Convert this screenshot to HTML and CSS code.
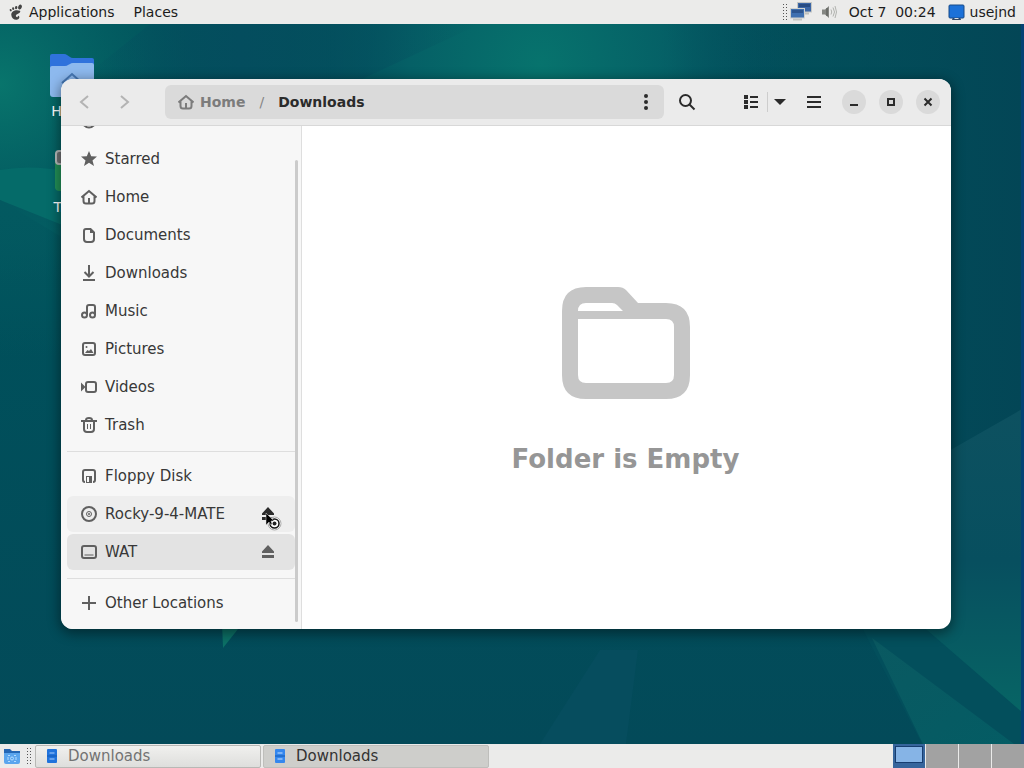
FILE: index.html
```html
<!DOCTYPE html>
<html lang="en">
<head>
<meta charset="utf-8">
<title>Downloads</title>
<link rel="stylesheet" href="styles.css">
</head>
<body>
<header class="panel panel-top">
  <nav class="panel-menus">
    <button class="panel-button" type="button">
      <svg class="foot" width="16" height="18" viewBox="0 0 16 18"><g fill="#444"><ellipse cx="12" cy="4" rx="1.800" ry="2.500" transform="rotate(25 12 4)"/><ellipse cx="8.200" cy="4.600" rx="1.200" ry="1.600" transform="rotate(8 8.200 4.600)"/><ellipse cx="5.200" cy="5.600" rx="1.100" ry="1.400" transform="rotate(-12 5.200 5.600)"/><ellipse cx="2.700" cy="7.200" rx="1" ry="1.200" transform="rotate(-25 2.700 7.200)"/><path d="M12 7.800C8 6.200 3 8 3.300 12c.2 3.500 3 5 5.500 4.700 2-.2 3-2 2.400-3.200-.4-1-1.500-1-1.400-.2.100 1-.8 1.200-1.500.5-1-1.200-.2-2.300 1.200-2.800 2-.7 3.500-2.400 2.500-3.200z"/></g></svg>
      Applications</button>
    <button class="panel-button" type="button">Places</button>
  </nav>
  <div class="tray">
    <span class="grip"></span>
    <svg width="22" height="20" viewBox="0 0 22 20"><rect x="7.500" y=".5" width="14" height="9.500" fill="#3b66a6" stroke="#c5c7c4"/><path d="M9 2h11v3H9z" fill="#284c83"/><path d="M12 10.500h7v2h-7z" fill="#bfc1bd"/><rect x=".5" y="6.500" width="14" height="9.500" fill="#3f70b0" stroke="#d0d2cf"/><path d="M2 8h11v3H2z" fill="#2d558e"/><path d="M3 16.500h9v2H3z" fill="#c2c4c0"/></svg>
    <svg class="speaker" width="16" height="16" viewBox="0 0 16 16"><path d="M1 5.500h3L8 2v12l-4-3.500H1z" fill="#858783"/><path d="M6 4v8" stroke="#50524f"/><path d="M10 5.500q1.500 2.500 0 5M12 3.500q3 4.500 0 9M14 2q3 6 0 12" fill="none" stroke="#b0b2ae"/></svg>
    <time class="clock">Oct 7&nbsp; 00:24</time>
    <button class="panel-button user" type="button"><svg width="17" height="17" viewBox="0 0 17 17"><path d="M5 13h7l1 3H4z" fill="#344965"/><rect x="1" y="1" width="15" height="13" rx="1" fill="#1c71d8" stroke="#164a88"/><path d="M6.500 14.500h4" stroke="#dedede"/></svg>usejnd</button>
  </div>
</header>

<main class="desktop">
  <svg class="wallpaper" viewBox="0 0 1024 720" preserveAspectRatio="none" aria-hidden="true">
    <defs>
      <linearGradient id="base" x1="0" y1="0" x2="0" y2="1"><stop offset="0" stop-color="#01525b"/><stop offset=".4" stop-color="#00505b"/><stop offset="1" stop-color="#034a59"/></linearGradient>
      <radialGradient id="glow" cx="540" cy="40" r="260" gradientUnits="userSpaceOnUse"><stop offset="0" stop-color="#07736d"/><stop offset=".5" stop-color="#056066"/><stop offset="1" stop-color="#044e60" stop-opacity="0"/></radialGradient>
      <radialGradient id="corner" cx="0" cy="60" r="200" gradientUnits="userSpaceOnUse"><stop offset="0" stop-color="#08756c"/><stop offset="1" stop-color="#056568" stop-opacity="0"/></radialGradient>
      <linearGradient id="dark"><stop offset="0" stop-color="#034a59" stop-opacity="0"/><stop offset="1" stop-color="#034656"/></linearGradient>
      <linearGradient id="shade"><stop offset="0" stop-color="#044d5e" stop-opacity="0"/><stop offset=".4" stop-color="#044d5e"/><stop offset="1" stop-color="#044d5e" stop-opacity="0"/></linearGradient>
      <linearGradient id="fade" x1="0" y1="0" x2="0" y2="1"><stop offset="0" stop-color="#035960"/><stop offset="1" stop-color="#035960" stop-opacity="0"/></linearGradient>
      <linearGradient id="ray" x1="0" y1="0" x2="1" y2="1"><stop offset="0" stop-color="#0a5961"/><stop offset="1" stop-color="#045c64"/></linearGradient>
      <linearGradient id="facet" x1="0" y1="0" x2="0" y2="1"><stop offset="0" stop-color="#0d5160"/><stop offset=".5" stop-color="#074f5f"/><stop offset="1" stop-color="#076565"/></linearGradient>
    </defs>
    <rect width="1024" height="720" fill="url(#base)"/>
    <rect width="1024" height="720" fill="url(#glow)"/>
    <rect width="400" height="300" fill="url(#corner)"/>
    <path d="M150 0h330L360 56H80z" fill="url(#shade)"/>
    <rect x="660" width="364" height="430" fill="url(#dark)"/>
    <path d="M0 146q32-6 70 2v70L0 176z" fill="#056b69"/>
    <path d="M0 176l70 28v130H0z" fill="url(#fade)"/>
    <path d="M222 600h20l-19 24z" fill="#0c7066"/>
    <path d="M600 626h38l-12 94h-86z" fill="#064d5e"/>
    <path d="M940 432l84-48v306L870 600z" fill="url(#facet)"/>
    <path d="M860 600h60l104 90v30H922z" fill="#034f5c"/>
    <path d="M872 614l142 106h-91z" fill="url(#ray)"/>
    <path d="M1021 0h3v720h-3z" fill="#034274"/>
  </svg>

  <div class="shortcuts">
    <a class="shortcut" href="#home"><svg width="44" height="48" viewBox="0 0 44 48"><path d="M0 3q0-2 2-2h12q2 0 3 1l3 2q1 1 3 1h19q2 0 2 2v20H0z" fill="#2f72dc"/><path d="M0 15q0-2 2-2h13q2 0 3-1l2-1q1-1 3-1h19q2 0 2 2v29q0 3-3 3H3q-3 0-3-3z" fill="#8db9ee"/><path d="M12 30l10-9 10 9" fill="none" stroke="#4678b5" stroke-width="2"/></svg><span>Home</span></a>
    <a class="shortcut" href="#trash"><svg width="36" height="48" viewBox="0 0 36 48"><path d="M1 12h34v27q0 3-3 3H5q-3 0-4-3z" fill="#229158"/><rect x="2" y="2" width="32" height="13" rx="3" fill="#707274" stroke="#b8bcbc" stroke-width="2"/></svg><span>Trash</span></a>
  </div>

  <section class="window" aria-label="Files">
    <div class="headerbar">
      <div class="history">
        <button class="icon-button faded" type="button" aria-label="Back"><svg width="16" height="16" viewBox="0 0 16 16"><path d="M11 2L4 8l7 6" class="line"/></svg></button>
        <button class="icon-button faded" type="button" aria-label="Forward"><svg width="16" height="16" viewBox="0 0 16 16"><path d="M5 2l7 6-7 6" class="line"/></svg></button>
      </div>
      <div class="pathbar">
        <a class="crumb" href="#home"><svg width="16" height="16" viewBox="0 0 16 16"><path d="M.5 8.500L8 2l7.500 6.500M2.500 7.500v4.500q0 2.500 2.500 2.500h6q2.500 0 2.500-2.500V7.500" class="line"/><path d="M7 9h2v6H7z" fill="currentColor"/></svg>Home</a>
        <span class="slash">/</span>
        <a class="crumb current" href="#downloads">Downloads</a>
        <button class="icon-button more" type="button" aria-label="Folder menu"><svg width="16" height="18" viewBox="0 0 16 18"><g fill="currentColor"><circle cx="8" cy="3" r="2"/><circle cx="8" cy="9" r="2"/><circle cx="8" cy="15" r="2"/></g></svg></button>
      </div>
      <button class="icon-button search" type="button" aria-label="Search"><svg width="18" height="18" viewBox="0 0 18 18"><circle cx="7.500" cy="7.500" r="5.500" class="line"/><path d="M11.500 11.500l5 5" class="line"/></svg></button>
      <div class="view-switch">
        <button class="icon-button" type="button" aria-label="List view"><svg width="16" height="16" viewBox="0 0 16 16"><path d="M1 1h4v4H1zM1 6h4v4H1zM1 11h4v4H1zM7 2h8v2H7zM7 7h8v2H7zM7 12h8v2H7z" fill="currentColor"/></svg></button>
        <button class="icon-button arrow" type="button" aria-label="View options"><svg width="14" height="8" viewBox="0 0 14 8"><path d="M1 1h12L7 7z" fill="currentColor"/></svg></button>
      </div>
      <button class="icon-button" type="button" aria-label="Main menu"><svg width="16" height="16" viewBox="0 0 16 16"><path d="M1 2h14v2H1zM1 7h14v2H1zM1 12h14v2H1z" fill="currentColor"/></svg></button>
      <div class="controls">
        <button class="control" type="button" aria-label="Minimize"><svg width="16" height="16" viewBox="0 0 16 16"><path d="M4 10h8v2H4z" fill="currentColor"/></svg></button>
        <button class="control" type="button" aria-label="Maximize"><svg width="16" height="16" viewBox="0 0 16 16"><path d="M5 5h6v6H5z" class="line"/></svg></button>
        <button class="control" type="button" aria-label="Close"><svg width="16" height="16" viewBox="0 0 16 16"><path d="M4.500 4.500l7 7M11.500 4.500l-7 7" class="line"/></svg></button>
      </div>
    </div>

    <div class="content">
      <aside class="sidebar">
        <div class="places">
          <a class="place" href="#recent" aria-label="Recent"><svg width="16" height="16" viewBox="0 0 16 16"><circle cx="8" cy="8" r="6.500" class="line"/><path d="M8 4v5h4" class="line"/></svg></a>
          <a class="place" href="#starred"><svg width="16" height="16" viewBox="0 0 16 16"><path d="M8 0l2.200 5.300L16 5.600l-4.500 3.800L13 15l-5-3.200L3 15l1.500-5.600L0 5.600l5.800-.3z" fill="currentColor"/></svg>Starred</a>
          <a class="place" href="#home"><svg width="16" height="16" viewBox="0 0 16 16"><path d="M.5 8.500L8 2l7.500 6.500M2.500 7.500v4.500q0 2.500 2.500 2.500h6q2.500 0 2.500-2.500V7.500" class="line"/><path d="M7 9h2v6H7z" fill="currentColor"/></svg>Home</a>
          <a class="place" href="#documents"><svg width="16" height="16" viewBox="0 0 16 16"><path d="M5 2h4.500L13 5.500V12q0 3-3 3H6q-3 0-3-3V4q0-2 2-2z" class="line"/><path d="M9 2v4h4z" fill="currentColor"/></svg>Documents</a>
          <a class="place" href="#downloads"><svg width="16" height="16" viewBox="0 0 16 16"><path d="M8 0v11M3.500 7L8 11.500 12.500 7M2 15h12" class="line"/></svg>Downloads</a>
          <a class="place" href="#music"><svg width="16" height="16" viewBox="0 0 16 16"><circle cx="3.500" cy="12" r="2.500" class="line"/><circle cx="11.500" cy="12" r="2.500" class="line"/><path d="M6 12V4q0-2 2-2h4q2 0 2 2v8" class="line"/></svg>Music</a>
          <a class="place" href="#pictures"><svg width="16" height="16" viewBox="0 0 16 16"><rect x="2" y="2" width="12" height="12" rx="2" class="line"/><path d="M4 12l2.500-3 1.500 1 2-2 2.500 4z" fill="currentColor"/><circle cx="5.500" cy="6" r="1" fill="currentColor"/></svg>Pictures</a>
          <a class="place" href="#videos"><svg width="16" height="16" viewBox="0 0 16 16"><rect x="5" y="3" width="10" height="10" rx="2" class="line"/><path d="M0 3.500L4.500 8 0 12.500z" fill="currentColor"/></svg>Videos</a>
          <a class="place" href="#trash"><svg width="16" height="16" viewBox="0 0 16 16"><path d="M0 4h16M5 4V3q0-2 3-2t3 2v1M3 4v8q0 3 3 3h4q3 0 3-3V4" class="line"/><path d="M6.500 7v5M9.500 7v5" stroke="currentColor" fill="none"/></svg>Trash</a>
          <hr class="rule">
          <a class="place" href="#floppy"><svg width="16" height="16" viewBox="0 0 16 16"><path d="M4 14q-2 0-2-2V4q0-2 2-2h8q2 0 2 2v8q0 2-2 2" class="line"/><path d="M5 8h6v7H5zM6 9v5h2V9z" fill="currentColor" fill-rule="evenodd"/></svg>Floppy Disk</a>
          <div class="place hovered"><a class="place-link" href="#rocky"><svg width="16" height="16" viewBox="0 0 16 16"><circle cx="8" cy="8" r="7" class="line"/><circle cx="8" cy="8" r="2.500" fill="none" stroke="currentColor"/><circle cx="8" cy="8" r="1" fill="currentColor"/></svg>Rocky-9-4-MATE</a>
            <button class="eject dark" type="button" aria-label="Eject Rocky-9-4-MATE"><svg width="16" height="16" viewBox="0 0 16 16"><path d="M8 1l6 6.500V9H2V7.500zM2 11h12v3H2z" fill="currentColor"/></svg>
              <svg class="pointer" width="18" height="21" viewBox="0 0 18 21"><circle cx="10.500" cy="13.500" r="6.500" fill="#fff" stroke="#aaa"/><circle cx="10.500" cy="13.500" r="4.500" fill="#fff" stroke="#111" stroke-width="1.500"/><circle cx="10.500" cy="13.500" r="2" fill="#222"/><path d="M2 3v12l3-3 2 3 1-1-1-3h3z" fill="#000" stroke="#ddd" stroke-width=".5"/></svg></button></div>
          <div class="place selected"><a class="place-link" href="#wat"><svg width="16" height="16" viewBox="0 0 16 16"><rect x="1" y="2" width="14" height="12" rx="2" class="line"/><path d="M3.500 11h9" stroke="currentColor" fill="none"/></svg>WAT</a>
            <button class="eject" type="button" aria-label="Eject WAT"><svg width="16" height="16" viewBox="0 0 16 16"><path d="M8 1l6 6.500V9H2V7.500zM2 11h12v3H2z" fill="currentColor"/></svg></button></div>
          <hr class="rule">
          <a class="place" href="#other"><svg width="16" height="16" viewBox="0 0 16 16"><path d="M8 1v14M1 8h14" class="line"/></svg>Other Locations</a>
        </div>
        <span class="scrollbar"></span>
      </aside>
      <div class="empty">
        <svg width="128" height="128" viewBox="0 0 128 128"><path fill="#c6c6c6" fill-rule="evenodd" d="M24 8h32q5 0 8 3l12 13h28q24 0 24 24v48q0 24-24 24H24Q0 120 0 96V32Q0 8 24 8zM16 32h45l-6-6q-2-2-5-2H24q-8 0-8 8zM16 40v56q0 8 8 8h80q8 0 8-8V48q0-8-8-8z"/></svg>
        <h1>Folder is Empty</h1>
      </div>
    </div>
  </section>
</main>

<footer class="panel panel-bottom">
  <button class="panel-button show-desktop" type="button" aria-label="Show desktop"><svg width="16" height="16" viewBox="0 0 16 16"><path d="M0 1h6l2 2h8v4H0z" fill="#2467b5"/><path d="M0 5h16v9q0 2-2 2H2q-2 0-2-2z" fill="#5aa5ee"/><g fill="none" stroke="#b5dcff"><circle cx="8" cy="10.500" r="1.500"/><path d="M4 7.500h2M10 7.500h2M4 9v3M12 9v3M4 13.500h2M10 13.500h2"/></g></svg></button>
  <span class="grip"></span>
  <div class="tasks">
    <button class="task minimized" type="button"><svg width="14" height="14" viewBox="0 0 14 14"><rect x="2" width="10" height="14" rx="1" fill="#2073dc"/><path d="M4.500 4h5M4.500 10h5" stroke="#a9d0ff"/><path d="M2 7h10" stroke="#155bb2"/></svg>Downloads</button>
    <button class="task active" type="button"><svg width="14" height="14" viewBox="0 0 14 14"><rect x="2" width="10" height="14" rx="1" fill="#3487ee"/><path d="M4.500 4h5M4.500 10h5" stroke="#c8e2ff"/><path d="M2 7h10" stroke="#155bb2"/></svg>Downloads</button>
  </div>
  <div class="pager">
    <button class="workspace on" type="button" aria-label="Workspace 1"><span class="thumb"></span></button>
    <button class="workspace" type="button" aria-label="Workspace 2"></button>
    <button class="workspace" type="button" aria-label="Workspace 3"></button>
    <button class="workspace" type="button" aria-label="Workspace 4"></button>
  </div>
</footer>
</body>
</html>
```
FILE: styles.css
```css
* { box-sizing: border-box; }

body {
  margin: 0;
  min-height: 100vh;
  display: flex;
  flex-direction: column;
  font: 15px/20px "DejaVu Sans", sans-serif;
  color: #1c1c1c;
}

button {
  margin: 0;
  padding: 0;
  border: 0;
  background: none;
  font: inherit;
  color: inherit;
}

a { color: inherit; text-decoration: none; }
svg { flex: none; display: block; }
.line { fill: none; stroke: currentColor; stroke-width: 2; }

.panel {
  height: 24px;
  flex: none;
  display: flex;
  align-items: center;
  background: #ebebea;
  white-space: nowrap;
}
.panel-top { justify-content: space-between; padding: 0 8px; font-size: 14px; }
.panel-menus { display: flex; gap: 19px; }
.panel-button { display: flex; align-items: center; gap: 5px; }
.tray { display: flex; align-items: center; }
.grip {
  width: 5px;
  height: 18px;
  background: radial-gradient(circle, #555 0 1px, transparent 1px) 0 0 / 3px 3px;
}
.tray .grip { margin-right: 3px; }
.speaker { margin: 0 12px 0 9px; }
.clock { margin-right: 12px; }

.desktop {
  position: relative;
  flex: 1;
  overflow: hidden;
  background: #034a59;
}
.wallpaper { position: absolute; inset: 0; width: 100%; height: 100%; }

.shortcuts {
  position: relative;
  display: flex;
  flex-direction: column;
  align-items: center;
  gap: 28px;
  width: 144px;
  padding-top: 29px;
  font-size: 14px;
  color: #fff;
}
.shortcut { display: flex; flex-direction: column; align-items: center; line-height: 20px; }

.window {
  position: absolute;
  inset: 55px 73px 115px 61px;
  display: flex;
  flex-direction: column;
  overflow: hidden;
  border-radius: 12px;
  background: #fff;
  box-shadow: 0 3px 12px 2px rgba(0, 0, 0, .4);
}

.headerbar {
  height: 47px;
  flex: none;
  display: flex;
  align-items: center;
  padding: 0 11px 0 8px;
  border-bottom: 1px solid #d8d8d8;
  background: #ebebeb;
  color: #2b2b2b;
}
.icon-button {
  width: 32px;
  height: 32px;
  flex: none;
  display: flex;
  align-items: center;
  justify-content: center;
}
.history { display: flex; gap: 7px; margin-right: 25px; }
.faded { color: #b3b3b3; }
.pathbar {
  flex: 1;
  height: 34px;
  display: flex;
  align-items: center;
  padding: 0 2px 0 13px;
  border-radius: 6px;
  background: #dadada;
  font-size: 14px;
  font-weight: bold;
}
.crumb { display: flex; align-items: center; gap: 6px; color: #7c7c7c; }
.crumb.current { color: #2b2b2b; }
.slash { margin: 0 14px; font-weight: normal; color: #858585; }
.more { margin-left: auto; }
.search { margin: 0 32px 0 7px; }
.view-switch { display: flex; align-items: center; margin-right: 7px; }
.arrow { width: 24px; border-left: 1px solid #cdcdcd; }
.arrow { height: 20px; }
.controls { display: flex; gap: 13px; margin-left: 12px; }
.control {
  width: 24px;
  height: 24px;
  display: flex;
  align-items: center;
  justify-content: center;
  border-radius: 50%;
  background: #dadada;
}

.content { flex: 1; min-height: 0; display: flex; }
.sidebar {
  position: relative;
  width: 241px;
  flex: none;
  display: flex;
  flex-direction: column;
  justify-content: flex-end;
  overflow: hidden;
  padding: 0 6px 7px;
  border-right: 1px solid #dedede;
  background: #f7f7f7;
  color: #383838;
}
.places { display: flex; flex-direction: column; }
.place {
  height: 36px;
  margin: 1px 0;
  display: flex;
  align-items: center;
  gap: 8px;
  padding: 0 14px;
  border-radius: 6px;
}
.place svg { color: #606060; }
.place-link { flex: 1; display: flex; align-items: center; gap: 8px; }
.hovered { background: #eeeeee; }
.selected { background: #e3e3e3; }
.eject { position: relative; margin-right: 5px; }
.eject.dark svg { color: #2b2b2b; }
.pointer { position: absolute; left: 4px; top: 4px; }
.rule {
  align-self: stretch;
  height: 1px;
  margin: 7px 0 5px;
  border: 0;
  background: #dedede;
}
.scrollbar {
  position: absolute;
  top: 34px;
  right: 3px;
  bottom: 7px;
  width: 3px;
  border-radius: 2px;
  background: #cbcbcb;
}

.empty {
  flex: 1;
  display: flex;
  flex-direction: column;
  align-items: center;
  justify-content: center;
  gap: 36px;
  padding: 0 2px 2px 0;
}
.empty h1 { margin: 0; font-size: 26px; line-height: 32px; color: #969696; }

.panel-bottom { padding-left: 4px; }
.show-desktop { margin-right: 6px; }
.tasks { display: flex; flex: 0 1 454px; gap: 2px; margin-left: 4px; }
.task {
  flex: 1;
  height: 23px;
  display: flex;
  align-items: center;
  gap: 9px;
  padding: 0 9px;
  border: 1px solid #b8b8b5;
  border-radius: 2px;
  background: linear-gradient(#f0f0ee, #dededc);
}
.minimized { color: #737373; }
.active { background: #cececb; border-color: #bebebb; color: #333; }
.pager { align-self: stretch; display: flex; gap: 1px; margin-left: auto; background: #ebebea; }
.workspace { width: 32px; display: flex; background: #a2a2a2; }
.workspace.on { background: #36659c; }
.thumb { width: 28px; height: 17px; margin: 2px; border: 1px solid #173d70; background: #86b4e6; }
```
